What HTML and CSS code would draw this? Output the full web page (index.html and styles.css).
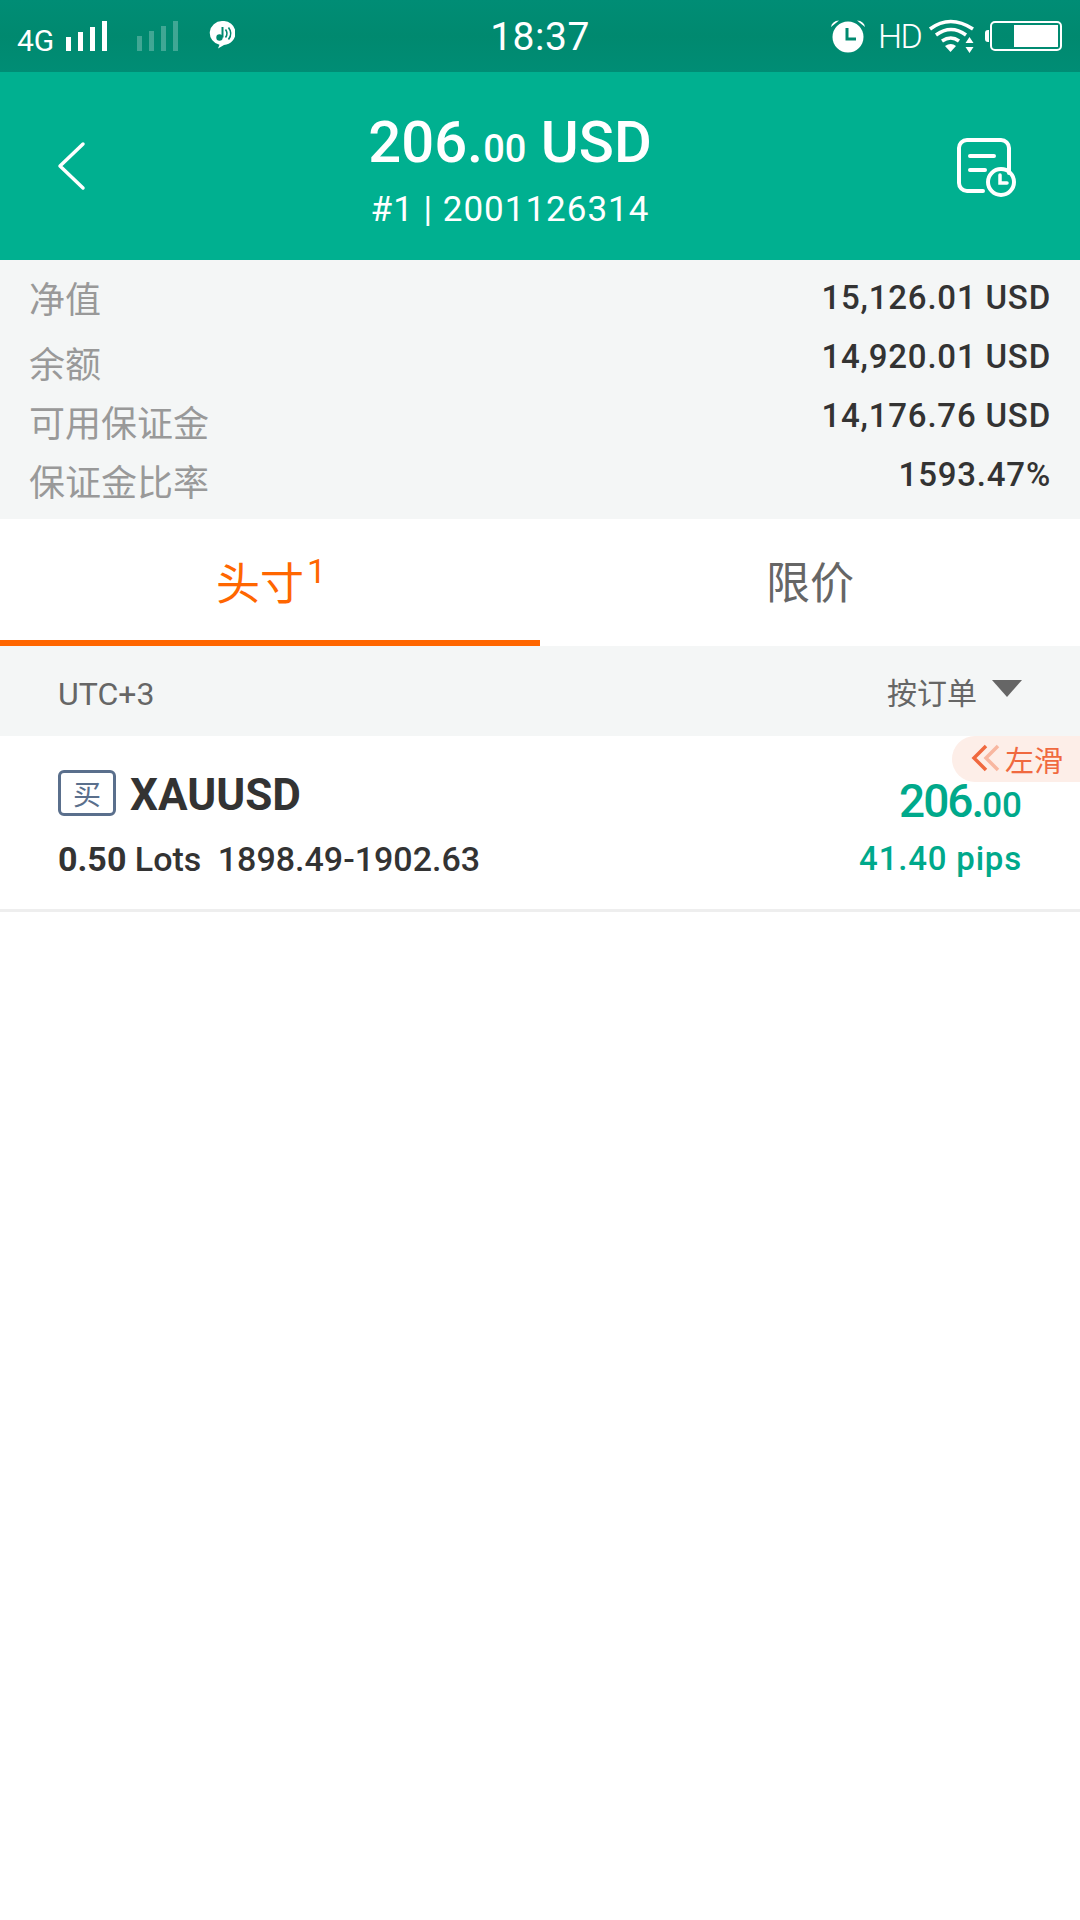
FILE: index.html
```html
<!DOCTYPE html>
<html lang="en">

<head>
    <meta charset="utf-8">
    <title>Positions</title>
    <link rel="stylesheet" href="styles.css">
</head>

<body>
    <div class="statusbar">
        <div class="status-left">
            <span class="net">4G</span>
            <svg class="bars" width="42" height="30" viewBox="0 0 42 30" fill="#fff"><rect x="0" y="16" width="5" height="14"/><rect x="12" y="11" width="5" height="19"/><rect x="24" y="6" width="5" height="24"/><rect x="36" y="0" width="5" height="30"/></svg>
            <svg class="bars bars-off" width="42" height="30" viewBox="0 0 42 30" fill="#fff"><rect x="0" y="15" width="5" height="15"/><rect x="12" y="10" width="5" height="20"/><rect x="24" y="5" width="5" height="25"/><rect x="36" y="0" width="5" height="30"/></svg>
            <svg class="music" width="26" height="28" viewBox="0 0 26 28"><path d="M13 0a12.500 12 0 0 1 2 24l-6 3.500 1.500-3.800A12.500 12 0 0 1 13 0z" fill="#fff"/><path d="M13.500 6v10.500" stroke="#00896f" stroke-width="2" fill="none"/><circle cx="10.500" cy="16.500" r="3.200" fill="#00896f"/><path d="M16.500 8.500q3 4 0 8M19.500 6.500q4.500 6 0 12" stroke="#00896f" stroke-width="1.600" fill="none"/></svg>
        </div>
        <div class="clock">18:37</div>
        <div class="status-right">
            <svg class="alarm" width="36" height="34" viewBox="0 0 36 34"><circle cx="18" cy="18" r="15.500" fill="#fff"/><path d="M1 8q1-6 8-6.500zM35 8q-1-6-8-6.500z" fill="#fff"/><path d="M17 9v11h9" stroke="#00896f" stroke-width="3" fill="none"/></svg>
            <span class="hd">HD</span>
            <svg class="wifi" width="48" height="34" viewBox="0 0 46 34" fill="none" stroke="#fff" stroke-width="3.500"><path d="M1 10q20-15 43 0M7 16q15-11 30 0M13 22q9-6 17 0"/><path d="M16 27q6-4 11 0l-5.500 6z" fill="#fff" stroke="none"/><path d="M40.500 18l4 6h-8zM40.500 34l4-6h-8z" fill="#fff" stroke="none"/></svg>
            <div class="battery-wrap">
                <span class="battery-nub"></span>
                <div class="battery"><span class="battery-fill"></span></div>
            </div>
        </div>
    </div>

    <div class="header">
        <svg class="back" width="30" height="50" viewBox="0 0 30 50" fill="none" stroke="#fff" stroke-width="3.500" stroke-linecap="round" stroke-linejoin="round"><path d="M26 3L3 25l23 22"/></svg>
        <div class="title">
            <div class="amount">206.<small>00</small> USD</div>
            <div class="account">#1 | 2001126314</div>
        </div>
        <svg class="history" width="62" height="60" viewBox="0 0 62 60" fill="none" stroke="#fff" stroke-width="4" stroke-linecap="round"><path d="M27 54H11a8 8 0 0 1-8-8V11a8 8 0 0 1 8-8h34a8 8 0 0 1 8 8v25"/><path d="M14 19h24M14 33h15"/><circle cx="45" cy="45" r="13"/><path d="M44 38v8h7" stroke-width="3.500"/></svg>
    </div>

    <div class="summary">
        <div class="labels">
            <div class="label label-1">净值</div>
            <div class="label label-2">余额</div>
            <div class="label label-3">可用保证金</div>
            <div class="label label-4">保证金比率</div>
        </div>
        <div class="values">
            <div class="value">15,126.01 USD</div>
            <div class="value">14,920.01 USD</div>
            <div class="value">14,176.76 USD</div>
            <div class="value">1593.47%</div>
        </div>
    </div>

    <div class="tabs">
        <div class="tab active">头寸<sup>1</sup></div>
        <div class="tab">限价</div>
    </div>

    <div class="filter">
        <span class="zone">UTC+3</span>
        <div class="sort">按订单<span class="caret"></span></div>
    </div>

    <div class="order">
        <div class="hint">
            <svg width="30" height="32" viewBox="0 0 30 32" fill="none" stroke-width="3.500"><path d="M15 3L3 15l12 12" stroke="#f0693f"/><path d="M27 3L15 15l12 12" stroke="#f8b7a0"/></svg>
            <span>左滑</span>
        </div>
        <div class="order-left">
            <div class="symbol-line">
                <span class="side">买</span>
                <span class="symbol">XAUUSD</span>
            </div>
            <div class="detail"><b>0.50</b> Lots <span class="prices">1898.49-1902.63</span></div>
        </div>
        <div class="order-right">
            <div class="profit">206.<small>00</small></div>
            <div class="pips">41.40 pips</div>
        </div>
    </div>
</body>

</html>
```

FILE: styles.css
```css
*{
    box-sizing: border-box;
}

body{
    margin: 0;
    width: 1080px;
    height: 1920px;
    background-color: #fff;
    font-family: Roboto, "Noto Sans CJK SC", sans-serif;
    overflow: hidden;
}

.statusbar{
    height: 72px;
    display: grid;
    grid-template-columns: 1fr auto 1fr;
    align-items: center;
    background: linear-gradient(#008d75, #00896f 50%, #008d75);
    color: #fff;
}

.status-left{
    display: flex;
    align-items: center;
    padding-left: 17px;
}

.net{
    font-size: 30px;
    width: 49px;
    margin-top: 8px;
}

.bars-off{
    margin-left: 29px;
    opacity: .25;
}

.music{
    margin-left: 30px;
    margin-top: -2px;
}

.clock{
    font-size: 39px;
    letter-spacing: .5px;
    margin-top: 2px;
}

.status-right{
    display: flex;
    align-items: center;
    justify-content: flex-end;
    padding-right: 18px;
}

.alarm{
    margin-right: 3px;
}

.hd{
    font-size: 34px;
    font-weight: 300;
    letter-spacing: -1.5px;
    margin-left: 9px;
    width: 50px;
}

.battery-wrap{
    display: flex;
    align-items: center;
    margin-left: 9px;
}

.battery-nub{
    width: 4px;
    height: 12px;
    background-color: #fff;
    border-radius: 3px 0 0 3px;
    margin-right: 1px;
}

.battery{
    width: 72px;
    height: 30px;
    border: 2px solid #fff;
    border-radius: 5px;
    padding: 2px;
    display: flex;
    justify-content: flex-end;
}

.battery-fill{
    width: 44px;
    background-color: #fff;
}

.header{
    height: 188px;
    background-color: #00b090;
    color: #fff;
    display: flex;
    align-items: center;
    padding: 0 62px 0 57px;
}

.back{
    margin-top: -1px;
}

.title{
    flex: 1;
    text-align: center;
    padding-right: 23px;
    margin-top: 7px;
}

.amount{
    font-size: 58px;
    font-weight: 500;
    line-height: 68px;
}

.amount small{
    font-size: 38px;
}

.account{
    font-size: 35px;
    line-height: 44px;
    letter-spacing: 1px;
    margin-top: 5px;
}

.history{
    margin-top: 1px;
}

.summary{
    height: 259px;
    background-color: #f4f6f6;
    display: flex;
    justify-content: space-between;
    padding: 18px 29px 0;
}

.label{
    font-size: 36px;
    color: #999;
    line-height: 46px;
}

.label-2{
    margin-top: 19px;
}

.label-3,
.label-4{
    margin-top: 13px;
}

.values{
    text-align: right;
    margin-top: -3px;
}

.value{
    font-size: 33px;
    font-weight: 500;
    color: #333;
    line-height: 46px;
    letter-spacing: .8px;
    margin-bottom: 13px;
}

.tabs{
    height: 127px;
    display: flex;
}

.tab{
    flex: 0 0 50%;
    font-size: 44px;
    color: #666;
    display: flex;
    justify-content: center;
    align-items: center;
    padding-bottom: 6px;
}

.tab.active{
    color: #ff6600;
    border-bottom: 6px solid #ff6600;
    padding: 2px 0 0 2px;
}

.tab sup{
    font-size: 34px;
    line-height: 1;
    align-self: center;
    margin: -19px 0 0 3px;
}

.filter{
    height: 90px;
    background-color: #f4f6f6;
    color: #666;
    font-size: 30px;
    display: flex;
    justify-content: space-between;
    align-items: center;
    padding: 0 58px;
}

.zone{
    font-size: 32px;
    margin-top: 5px;
}

.sort{
    display: flex;
    align-items: center;
}

.caret{
    width: 0;
    height: 0;
    border-left: 15px solid transparent;
    border-right: 15px solid transparent;
    border-top: 17px solid #666;
    margin: -6px 0 0 15px;
}

.order{
    position: relative;
    height: 176px;
    border-bottom: 3px solid #eee;
    display: flex;
    justify-content: space-between;
    padding: 34px 58px 0;
}

.hint{
    position: absolute;
    top: 0;
    right: 0;
    width: 128px;
    height: 46px;
    background-color: #fdeee8;
    border-radius: 23px 0 0 23px;
    color: #f0693f;
    font-size: 29px;
    display: flex;
    align-items: center;
    padding-left: 19px;
    gap: 4px;
}

.symbol-line{
    display: flex;
    align-items: center;
    height: 46px;
}

.side{
    width: 58px;
    height: 46px;
    border: 3px solid #5a6f8c;
    border-radius: 6px;
    color: #5a6f8c;
    font-size: 28px;
    display: flex;
    justify-content: center;
    align-items: center;
}

.symbol{
    font-size: 44px;
    font-weight: 700;
    color: #333;
    margin: 3px 0 0 14px;
}

.detail{
    font-size: 34px;
    font-weight: 500;
    color: #333;
    margin-top: 21px;
    line-height: 44px;
}

.detail b{
    font-weight: 700;
}

.prices{
    margin-left: 8px;
}

.order-right{
    text-align: right;
    color: #00a98b;
    font-weight: 500;
    padding-top: 4px;
}

.profit{
    font-size: 46px;
    line-height: 54px;
    letter-spacing: -2px;
}

.profit small{
    font-size: 35px;
    letter-spacing: 0;
}

.pips{
    font-size: 33px;
    line-height: 44px;
    letter-spacing: .8px;
    margin-top: 4px;
}
```
